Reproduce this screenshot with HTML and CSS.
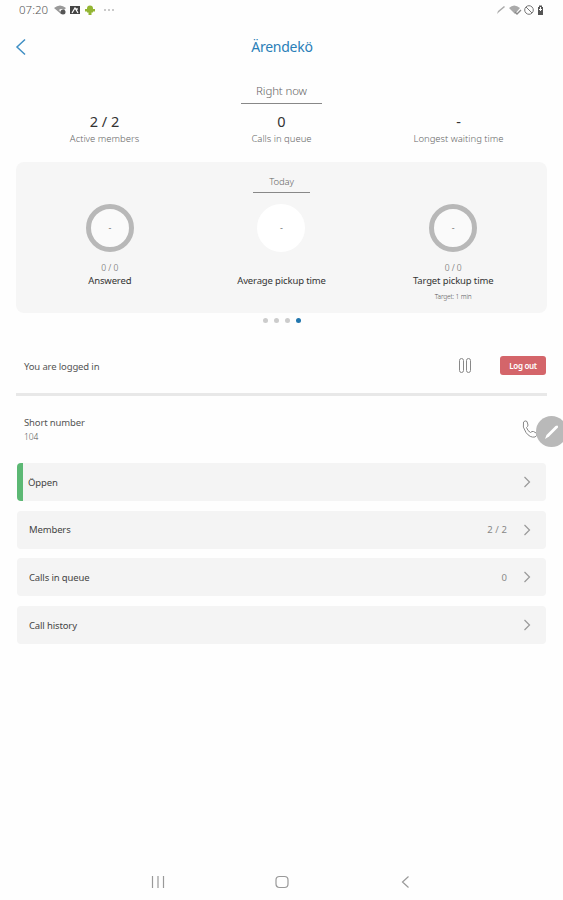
FILE: index.html
```html
<!DOCTYPE html>
<html lang="sv">
  <head>
    <meta charset="UTF-8" />
    <meta name="viewport" content="width=device-width, initial-scale=1.0" />
    <title>Ärendekö</title>
    <link rel="stylesheet" href="styles.css">
  </head>

  <body>
    <div class="statusbar">
      <span class="clock">07:20</span>
      <svg class="status-left" width="64" height="12" viewBox="0 0 64 12">
        <path d="M0 4Q6 -1 12 4L10 6Q7 4 5 6L8 9 7 10Z" fill="#999" />
        <circle cx="9" cy="8" r="2.5" fill="#555" />
        <rect x="16" y="2" width="10" height="8" fill="#444" />
        <path d="M18 9l3-5 3 5M23 4v2" stroke="#fff" stroke-width="1.2" fill="none" />
        <path d="M33 4.500a3 3 0 0 1 6 0v4h-1.500v2.500h-3V8.500H33zM31 5h10v2.500H31z" fill="#93b533" />
        <g fill="#888"><circle cx="51" cy="6" r=".8" /><circle cx="55" cy="6" r=".8" /><circle cx="59" cy="6" r=".8" /></g>
      </svg>
      <svg class="status-right" width="50" height="12" viewBox="0 0 50 12">
        <path d="M1 10l1-3 6-5 1 1-6 5z" fill="#aaa" />
        <path d="M13 4q5-5 11 0l-5 6z" fill="#aaa" />
        <path d="M19 8l2 2 4-4" stroke="#888" fill="none" stroke-width="1.300" />
        <circle cx="33" cy="6" r="4.300" stroke="#777" fill="none" />
        <path d="M30 3l6 6" stroke="#777" />
        <path d="M42 3h1V1.500h3V3h1v8h-5z" fill="#555" />
        <path d="M44.500 3v4M43 5.500h3" stroke="#fff" />
      </svg>
    </div>

    <header class="header">
      <svg class="back" width="12" height="18" viewBox="0 0 12 18"><path d="M10 1.500L2 9l8 7.500" /></svg>
      <h1>Ärendekö</h1>
    </header>

    <main>
      <h2 class="period">Right now</h2>
      <section class="stats">
        <div class="stat"><strong>2 / 2</strong><span>Active members</span></div>
        <div class="stat"><strong>0</strong><span>Calls in queue</span></div>
        <div class="stat"><strong>-</strong><span>Longest waiting time</span></div>
      </section>

      <section class="card">
        <h2 class="period small">Today</h2>
        <div class="gauges">
          <div class="gauge">
            <div class="ring">-</div>
            <span class="count">0 / 0</span>
            <span class="name">Answered</span>
          </div>
          <div class="gauge">
            <div class="ring plain">-</div>
            <span class="count"></span>
            <span class="name">Average pickup time</span>
          </div>
          <div class="gauge">
            <div class="ring">-</div>
            <span class="count">0 / 0</span>
            <span class="name">Target pickup time</span>
            <span class="note">Target: 1 min</span>
          </div>
        </div>
      </section>
      <div class="dots"><i></i><i></i><i></i><i class="active"></i></div>

      <section class="login">
        <span>You are logged in</span>
        <svg class="pause" width="14" height="17" viewBox="0 0 14 17">
          <rect x="1.500" y="1.500" width="4" height="14" rx="2" />
          <rect x="8.500" y="1.500" width="4" height="14" rx="2" />
        </svg>
        <button class="logout">Log out</button>
      </section>

      <section class="number">
        <div>
          <div class="number-label">Short number</div>
          <div class="number-value">104</div>
        </div>
        <svg class="phone" width="18" height="20" viewBox="0 0 18 20">
          <path d="M2.500 3Q4 1 6 2.500L7 6Q7 7.500 5.500 8.500Q6.500 12 9.500 13.500Q11 12 12.500 12.500L16 14.500Q16.500 16.500 14 18Q9 19 5 13.500Q1 8 2.500 3Z" />
        </svg>
        <div class="edit">
          <svg width="16" height="16" viewBox="0 0 16 16"><path d="M1 15l1.500-4 9-9q3-1.500 2.500 1.500l-9 9z" fill="#fff" /></svg>
        </div>
      </section>

      <nav class="list">
        <a class="row open"><span>Öppen</span><svg class="chevron" width="8" height="12" viewBox="0 0 8 12"><path d="M1.500 1l5 5-5 5" /></svg></a>
        <a class="row"><span>Members</span><em>2 / 2</em><svg class="chevron" width="8" height="12" viewBox="0 0 8 12"><path d="M1.500 1l5 5-5 5" /></svg></a>
        <a class="row"><span>Calls in queue</span><em>0</em><svg class="chevron" width="8" height="12" viewBox="0 0 8 12"><path d="M1.500 1l5 5-5 5" /></svg></a>
        <a class="row"><span>Call history</span><svg class="chevron" width="8" height="12" viewBox="0 0 8 12"><path d="M1.500 1l5 5-5 5" /></svg></a>
      </nav>
    </main>

    <footer class="navbar">
      <svg width="14" height="14" viewBox="0 0 14 14"><path d="M1.500 1v12M7 1v12M12.500 1v12" /></svg>
      <svg width="14" height="14" viewBox="0 0 14 14"><rect x="1" y="1.500" width="12" height="11" rx="3.500" /></svg>
      <svg width="14" height="14" viewBox="0 0 14 14"><path d="M10.500 1.500l-6 5.500 6 5.500" /></svg>
    </footer>
  </body>
</html>
```

FILE: styles.css
```css
* {
  box-sizing: border-box;
}

body {
  margin: 0;
  height: 900px;
  display: flex;
  flex-direction: column;
  background-color: #fefefe;
  color: #555;
  font-family: "Noto Sans", "Open Sans", sans-serif;
  font-size: 9.5px;
  font-weight: 400;
  letter-spacing: -0.14px;
  overflow: hidden;
}

h1,
h2 {
  margin: 0;
  font-weight: 400;
}

.statusbar {
  height: 20px;
  padding: 0 17px 0 19px;
  display: flex;
  align-items: center;
}

.clock {
  width: 35px;
  line-height: 18px;
  padding-bottom: 1px;
  font-size: 11.5px;
  font-weight: 300;
  letter-spacing: 0;
  color: #555;
}

.status-right {
  margin-left: auto;
}

.header {
  height: 53px;
  padding: 0 14px 0 15px;
  display: grid;
  grid-template-columns: 12px 1fr 12px;
  align-items: center;
}

.header h1 {
  text-align: center;
  font-size: 14px;
  letter-spacing: -0.25px;
  color: #2a7fb8;
}

.back path {
  fill: none;
  stroke: #3f8fc4;
  stroke-width: 1.5;
}

main {
  flex: 1;
  padding: 9px 16px 0;
}

.period {
  width: 81px;
  height: 22px;
  margin: 0 auto;
  border-bottom: 1px solid #888;
  line-height: 18px;
  text-align: center;
  white-space: nowrap;
  font-size: 11.5px;
  font-weight: 300;
  color: #666;
}

.period.small {
  width: 57px;
  height: 20px;
  line-height: 17px;
  font-size: 9.5px;
}

.stats {
  height: 58px;
  padding-top: 7px;
  display: grid;
  grid-template-columns: repeat(3, 1fr);
  text-align: center;
}

.stat strong {
  display: block;
  line-height: 20px;
  font-size: 14.5px;
  font-weight: 400;
  letter-spacing: 0;
  color: #333;
}

.stat span {
  display: block;
  line-height: 15px;
  font-size: 9.5px;
  font-weight: 300;
  letter-spacing: 0;
  color: #666;
}

.card {
  height: 151px;
  padding: 11px 8px 0;
  background-color: #f6f6f6;
  border-radius: 8px;
}

.gauges {
  margin-top: 11px;
  display: grid;
  grid-template-columns: repeat(3, 1fr);
}

.gauge {
  display: flex;
  flex-direction: column;
  align-items: center;
}

.ring {
  width: 48px;
  height: 48px;
  border: 5px solid #b8b8b8;
  border-radius: 50%;
  background-color: #fafafa;
  line-height: 37px;
  text-align: center;
  font-size: 9px;
  color: #777;
}

.ring.plain {
  border-color: #fff;
  background-color: #fff;
}

.count {
  height: 12px;
  margin-top: 10px;
  line-height: 12px;
  font-size: 8.5px;
  font-weight: 300;
  letter-spacing: 0;
}

.name {
  line-height: 14px;
  font-size: 9.5px;
  color: #333;
}

.note {
  margin-top: 4px;
  line-height: 10px;
  font-size: 6.5px;
  font-weight: 300;
}

.dots {
  height: 14px;
  padding-left: 1px;
  display: flex;
  justify-content: center;
  align-items: center;
  gap: 6px;
}

.dots i {
  width: 5px;
  height: 5px;
  border-radius: 50%;
  background-color: #ccc;
}

.dots .active {
  background-color: #2176ae;
}

.login {
  height: 69px;
  padding: 11px 1px 0 8px;
  display: flex;
  align-items: center;
  border-bottom: 3px solid #e8e8e8;
}

.login span {
  padding-top: 2px;
}

.pause {
  margin-left: auto;
  margin-right: 28px;
}

.pause rect,
.phone path {
  fill: none;
  stroke: #888;
}

.logout {
  width: 46px;
  height: 19px;
  padding: 0;
  border: none;
  border-radius: 3px;
  background-color: #d4656a;
  color: #fff;
  font-family: inherit;
  font-size: 8px;
  font-weight: 600;
  letter-spacing: -0.3px;
}

.number {
  height: 67px;
  padding: 0 8px 1px 8px;
  display: flex;
  justify-content: space-between;
  align-items: center;
  position: relative;
}

.number-label {
  line-height: 14px;
}

.number-value {
  line-height: 13px;
  font-size: 8.5px;
  font-weight: 300;
}

/* floating pen button, runs past the screen edge */
.edit {
  position: absolute;
  right: -20px;
  top: 20px;
  width: 31px;
  height: 31px;
  display: flex;
  justify-content: center;
  align-items: center;
  border-radius: 50%;
  background-color: #b9b9b9;
}

.list {
  padding: 0 1px;
  display: flex;
  flex-direction: column;
  gap: 9.7px;
}

.row {
  height: 38px;
  padding: 0 15px 0 12px;
  display: flex;
  align-items: center;
  background-color: #f4f4f4;
  border-radius: 4px;
  color: #444;
}

.row.open {
  padding-left: 5px;
  border-left: 6px solid #5cb874;
}

.row em {
  margin-left: auto;
  font-style: normal;
  letter-spacing: 0.1px;
  color: #888;
}

.chevron {
  margin-left: auto;
}

.row em + .chevron {
  margin-left: 16px;
}

.chevron path {
  fill: none;
  stroke: #999;
  stroke-width: 1.2;
}

.navbar {
  height: 36px;
  padding: 0 151px 0 151px;
  display: flex;
  justify-content: space-between;
  align-items: center;
}

.navbar svg {
  fill: none;
  stroke: #999;
  stroke-width: 1.2;
}
```
